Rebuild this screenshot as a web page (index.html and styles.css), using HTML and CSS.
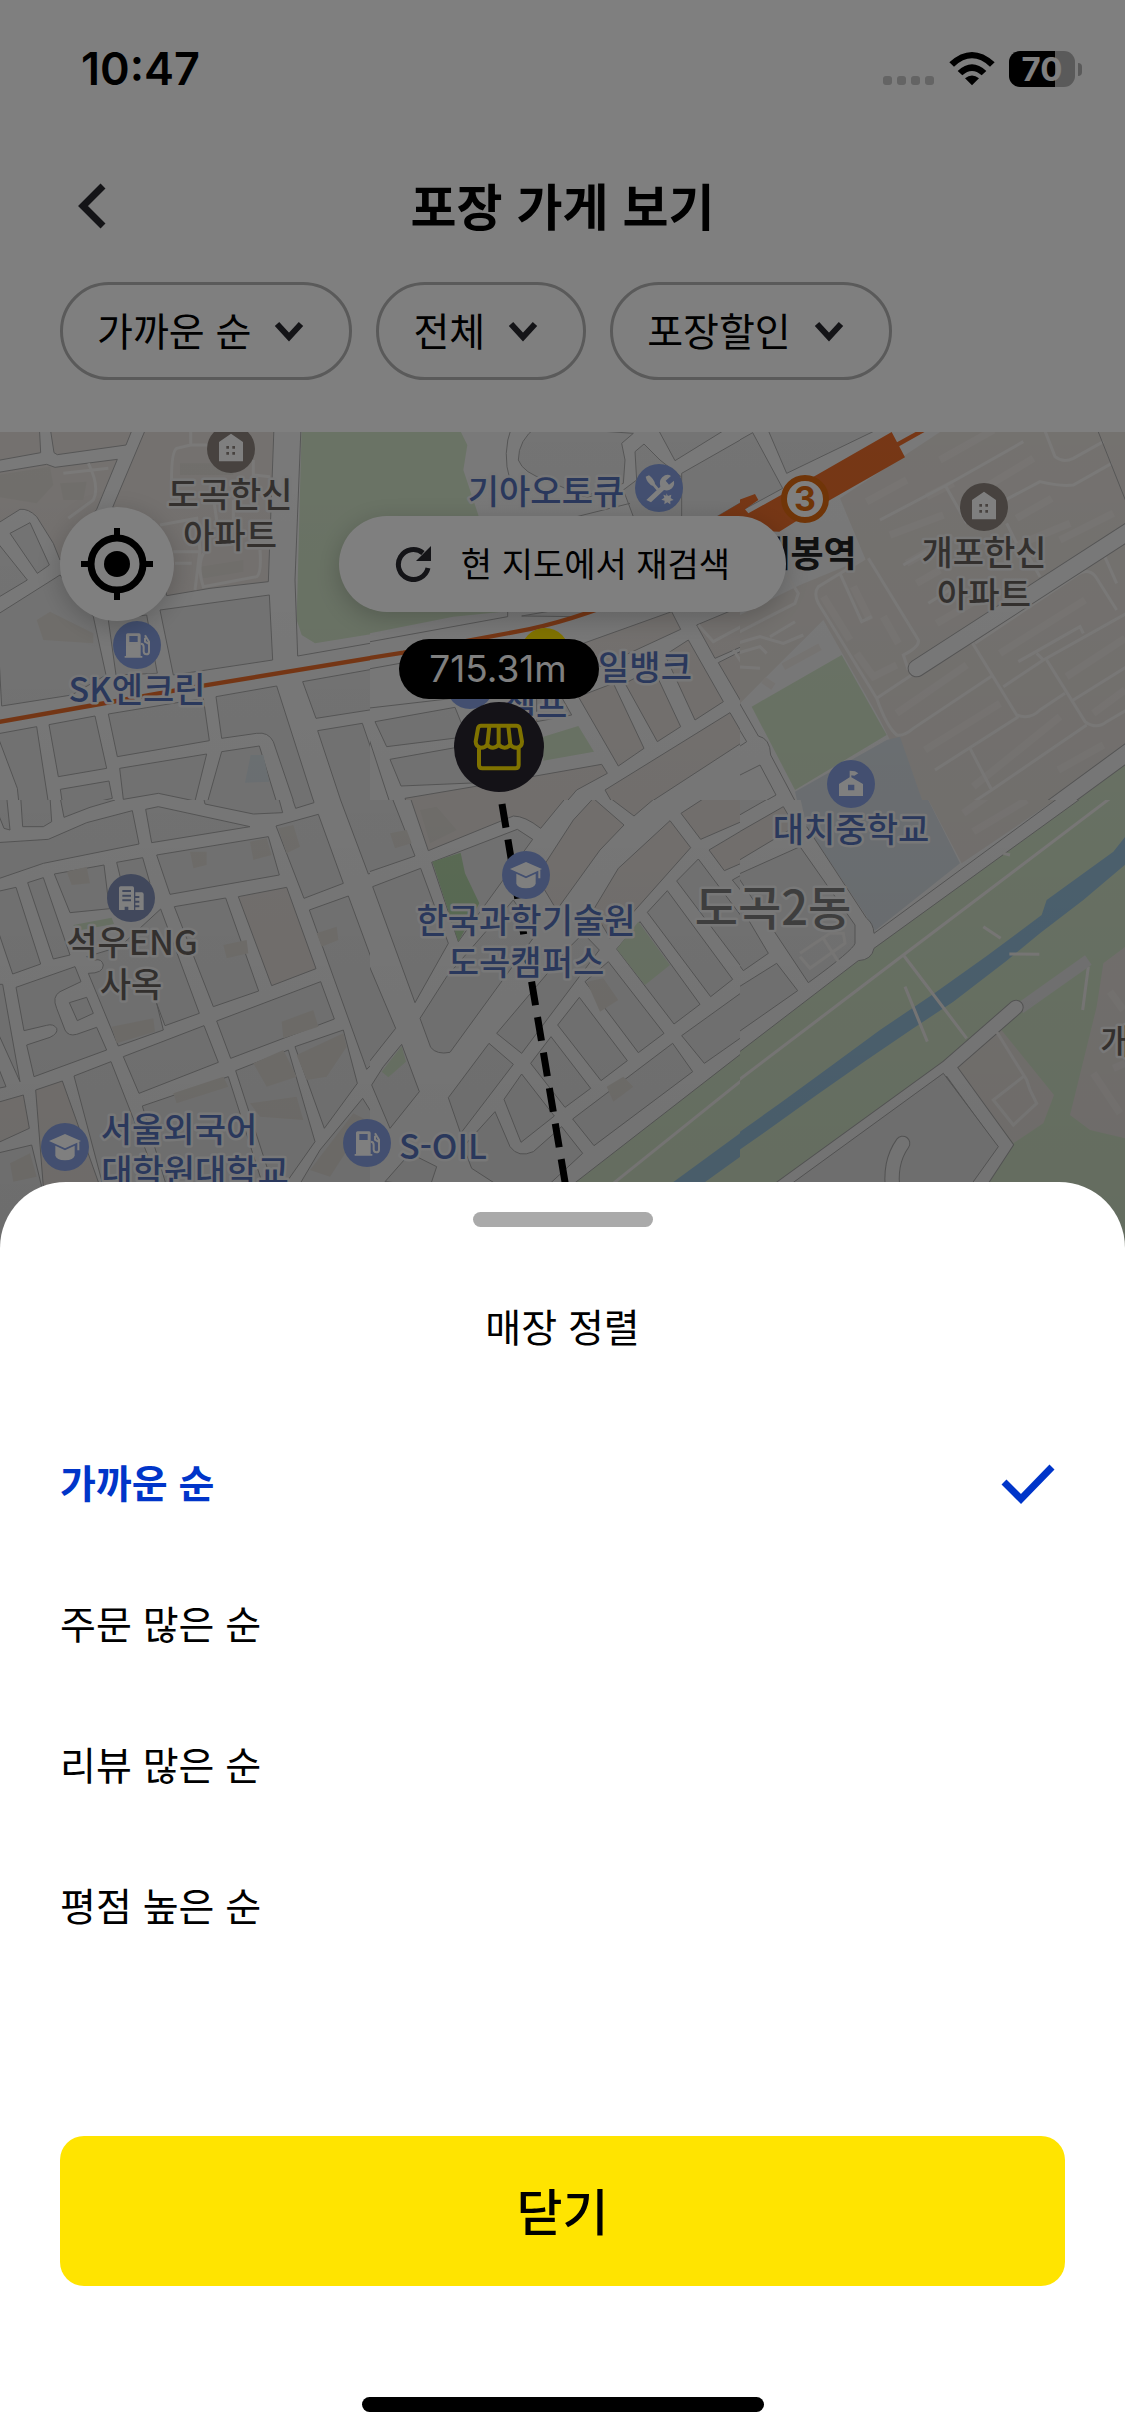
FILE: index.html
```html
<!DOCTYPE html>
<html lang="ko">
<head>
    <meta charset="UTF-8">
    <meta name="viewport" content="width=device-width, initial-scale=1.0">
    <title>포장 가게 보기</title>
    <link rel="stylesheet" href="styles.css">
</head>
<body>
    <div class="app">
        <div class="status-bar">
            <span class="time">10:47</span>
            <div class="status-icons">
                <svg class="dots" viewBox="0 0 52 36" width="52" height="36">
                    <rect x="0" y="25" width="9" height="9" rx="3"/>
                    <rect x="14" y="25" width="9" height="9" rx="3"/>
                    <rect x="28" y="25" width="9" height="9" rx="3"/>
                    <rect x="42" y="25" width="9" height="9" rx="3"/>
                </svg>
                <svg class="wifi" viewBox="0 0 138 108" width="46" height="36">
                    <path d="M69 103 L48 82 Q69 65 90 82 Z"/>
                    <path d="M26 60 Q69 20 112 60 L98 73 Q69 47 40 73 Z"/>
                    <path d="M1 34 Q69 -28 137 34 L123 47 Q69 -3 15 47 Z"/>
                </svg>
                <div class="battery"><span class="battery-level">70</span></div>
            </div>
        </div>

        <header class="header">
            <button class="back" aria-label="뒤로">
                <svg viewBox="0 0 28 46" width="28" height="46"><path d="M25 3 L5 23 L25 43"/></svg>
            </button>
            <h1>포장 가게 보기</h1>
        </header>

        <div class="filters">
            <button class="filter"><span>가까운 순</span>
                <svg viewBox="0 0 48 48" width="48" height="48"><path d="M12 17 L24 30 L36 17"/></svg>
            </button>
            <button class="filter"><span>전체</span>
                <svg viewBox="0 0 48 48" width="48" height="48"><path d="M12 17 L24 30 L36 17"/></svg>
            </button>
            <button class="filter"><span>포장할인</span>
                <svg viewBox="0 0 48 48" width="48" height="48"><path d="M12 17 L24 30 L36 17"/></svg>
            </button>
        </div>

        <main class="map-area">
            <svg class="map" viewBox="0 432 1125 868" preserveAspectRatio="xMidYMin slice">
                <defs>
                    <symbol id="poi-house" viewBox="0 0 144 144">
                        <circle cx="72" cy="72" r="72"/>
                        <path class="glyph" fill-rule="evenodd" d="M36 109 V51 L72 26 L108 51 V109 Z M58 63 v8 h8 v-8 Z M76 63 v8 h8 v-8 Z M58 81 v8 h8 v-8 Z M76 81 v8 h8 v-8 Z"/>
                    </symbol>
                    <symbol id="poi-fuel" viewBox="0 0 144 144">
                        <circle cx="72" cy="72" r="72"/>
                        <path class="glyph" fill-rule="evenodd" d="M39 105 V42 Q39 37 44 37 H78 Q83 37 83 42 V105 H88 V110 H35 V105 Z M49 45 V63 H74 V45 Z"/>
                        <path class="glyph-line" d="M83 68 Q92 68 92 78 V92 Q93 100 100 100 Q108 100 108 92 V62 L96 43 M96 50 V62 L106 68"/>
                    </symbol>
                    <symbol id="poi-cap" viewBox="0 0 144 144">
                        <circle cx="72" cy="72" r="72"/>
                        <path class="glyph" d="M24 54 L72 33 L120 54 L72 76 Z M43 68 L72 82 L101 68 V98 Q98 110 72 112 Q46 110 43 98 Z M109 58 H115 V82 H109 Z"/>
                    </symbol>
                    <symbol id="poi-office" viewBox="0 0 144 144">
                        <circle cx="72" cy="72" r="72"/>
                        <path class="glyph" fill-rule="evenodd" d="M36 108 V42 Q36 37 41 37 H76 Q81 37 81 42 V108 H64 V98 H53 V108 Z M46 48 v6 h26 v-6 Z M46 62 v6 h26 v-6 Z M46 76 v6 h26 v-6 Z M85 55 H104 Q110 55 110 61 V108 H85 V100 H97 V94 H85 V86 H97 V80 H85 V72 H97 V66 H85 Z"/>
                    </symbol>
                    <symbol id="poi-repair" viewBox="0 0 144 144">
                        <circle cx="72" cy="72" r="72"/>
                        <path class="glyph" d="M34 108 L76 68 Q70 44 90 34 Q100 30 108 36 L92 50 L102 62 L117 50 Q120 70 104 77 Q96 81 87 78 L48 115 Z M32 38 L42 34 Q58 46 60 60 L72 74 L66 80 L54 66 Q36 58 32 38 Z M94 88 l5 8 10 -4 -2 10 9 6 -10 3 0 10 -9 -6 -9 6 1 -11 -10 -3 9 -6 -3 -9 9 3 Z"/>
                    </symbol>
                    <symbol id="poi-school" viewBox="0 0 144 144">
                        <circle cx="72" cy="72" r="72"/>
                        <path class="glyph" fill-rule="evenodd" d="M36 108 V72 L68 52 V32 L84 34 L94 40 L82 47 L73 46 V52 L108 72 V108 Z M63 74 V91 H82 V74 Z"/>
                    </symbol>
                    <linearGradient id="shade" x1="0" y1="0" x2="0" y2="1">
                        <stop offset="0" stop-color="#000" stop-opacity="0.01"/>
                        <stop offset="1" stop-color="#000" stop-opacity="0.07"/>
                    </linearGradient>
                </defs>

                <rect class="road" x="0" y="432" width="1125" height="868"/>

                <!-- north west tile -->
                <svg x="0" y="420" width="380" height="390" viewBox="0 0 1140 1170">
                    <g class="block">
                        <path class="beige" d="M-10 20 H118 L122 98 L-10 122 Z"/>
                        <path class="beige" d="M150 20 L162 98 L172 104 L378 75 L400 20 Z"/>
                        <path class="beige" d="M-10 158 L140 133 L165 142 L352 118 L290 268 L180 420 L160 370 L110 290 Q85 265 60 268 L-10 312 Z"/>
                        <path d="M-10 365 L82 480 L-10 535 Z"/>
                        <path d="M30 340 L90 308 L148 435 L112 460 Z"/>
                        <path class="beige" d="M440 20 L338 262 L460 300 L500 527 L630 505 L805 485 L822 20 Z"/>
                        <path d="M480 570 L808 525 L818 720 L520 765 Z"/>
                        <path d="M-10 585 L180 465 L280 590 L318 765 L215 825 L5 858 Z"/>
                        <path d="M325 600 L440 585 L472 760 L348 765 Z"/>
                        <path d="M325 882 L610 835 L628 962 L352 1010 Z"/>
                        <path d="M648 830 L830 798 L942 1148 L888 1165 L820 965 Q805 935 770 940 L665 955 Z"/>
                        <path d="M908 785 L1160 740 V862 L948 895 Z"/>
                        <path d="M953 932 L1087 910 L1180 1180 H1035 Z"/>
                        <path d="M1127 903 L1160 898 V990 Z"/>
                        <path d="M147 914 L285 888 L320 1045 L175 1070 Z"/>
                        <path d="M-10 942 L110 920 L150 1180 H60 L52 1105 L-10 940 Z"/>
                        <path d="M359 1045 L620 1002 L585 1143 L475 1120 L370 1138 Z"/>
                        <path d="M181 1108 L327 1083 L337 1135 L190 1168 Z"/>
                        <path d="M665 995 L778 978 L840 1180 H700 L620 1155 Z"/>
                    </g>
                    <path class="house" d="M-10 165 L150 140 L160 195 L110 250 L-10 230 Z M180 190 L260 185 L250 240 L190 240 Z M110 600 L150 575 L280 640 V670 L130 660 Z M540 130 H700 V165 H540 Z M600 440 L730 420 V455 L610 475 Z"/>
                    <path class="lane" d="M265 130 Q300 200 280 240 L205 295 M190 160 L325 145 M572 30 V75 L530 85 Q512 95 515 210 M572 75 H625 M480 315 L590 295 L600 390 L585 510 M520 395 H600 M610 400 Q590 440 610 500 L770 470 Q785 460 780 390 M640 230 L650 300 M700 240 V300 M760 120 V165 L810 170 M525 430 H575"/>
                    <path class="park" d="M905 20 H1160 V635 L945 670 L905 645 L890 600 Z"/>
                    <path class="edge" d="M903 20 L885 480 L893 708 L1150 663"/>
                    <path class="water" d="M752 1005 L790 1005 L808 1085 L735 1088 Z"/>
                    <path class="rail" d="M-10 907 L300 852 L560 805 L1150 708"/>
                </svg>

                <!-- north tile -->
                <svg x="370" y="420" width="380" height="390" viewBox="0 0 1140 1170">
                    <rect class="road" width="1140" height="1170"/>
                    <path class="park" d="M-10 20 H265 L292 75 L280 150 L325 285 L400 575 L250 590 L-10 642 Z"/>
                    <g class="block">
                        <path d="M500 20 Q445 60 445 120 Q460 160 530 180 L640 230 L760 190 L765 120 L755 70 L790 40 Z"/>
                        <path d="M822 72 L795 95 L800 180 L760 210 L790 290 L900 300 L1060 270 L870 120 Z"/>
                        <path d="M860 20 L915 122 L1080 20 Z"/>
                        <path d="M935 160 L1160 32 V220 L1040 290 H935 Z"/>
                        <path class="beige" d="M640 670 L905 575 L932 628 L690 740 Z"/>
                        <path d="M15 905 L255 862 L290 950 L50 980 Z"/>
                        <path d="M60 1018 L300 975 L420 1045 L400 1085 L93 1098 Z"/>
                        <path class="beige" d="M105 1135 L400 1085 L695 1033 L712 1060 L620 1110 L560 1180 H120 Z"/>
                        <path class="beige" d="M625 830 L730 790 L822 985 L745 1038 Z"/>
                        <path class="beige" d="M765 790 L850 745 L932 920 L862 965 Z"/>
                        <path class="beige" d="M885 705 L955 660 L1060 845 L975 900 Z"/>
                        <path class="beige" d="M705 1110 L1080 878 L1128 960 L790 1180 H745 Z"/>
                        <path class="beige" d="M980 615 L1160 540 V660 L1035 715 Z"/>
                        <path class="beige" d="M1045 728 L1160 670 V925 Z"/>
                        <path d="M455 588 L560 570 H690 L620 590 Z"/>
                        <path d="M500 830 L560 805 L605 885 L500 905 Z"/>
                    </g>
                    <path class="park" d="M520 950 L625 918 L672 995 L520 1022 Z"/>
                    <path class="edge" d="M425 20 Q395 100 420 180 M-10 667 L413 590 V560 M-10 748 L90 730 M-10 865 L250 835 M-10 935 L70 1180 M620 290 L780 250 M620 245 L700 215"/>
                    <path class="lane" d="M985 615 L1030 665 L1150 600 M1090 690 L1130 750"/>
                    <path class="rail" d="M-10 715 L100 698 L440 635 Q600 605 780 530 L1040 300 L1160 230"/>
                    <path class="station" d="M1040 290 L1150 225 V300 Z"/>
                </svg>

                <!-- north east tile -->
                <svg x="740" y="420" width="385" height="390" viewBox="0 0 1155 1170">
                    <rect class="road" width="1155" height="1170"/>
                    <g class="block">
                        <path d="M-10 65 L38 38 L128 205 L-10 280 Z"/>
                        <path d="M80 20 L140 160 L430 20 Z"/>
                    </g>
                    <path class="estate" d="M300 235 L600 36 V20 H1160 V970 L900 1180 H560 L420 900 L250 600 L-10 860 V590 L130 520 L180 495 L375 415 Z"/>
                    <g class="houses">
                        <path d="M380 245 L500 180 M600 120 L760 30 M560 230 L640 190 M450 345 L610 285 M500 430 L640 350 M740 200 L880 115 M830 295 L935 235 M530 490 L600 450 M960 360 L1120 280 M590 610 L720 535 M780 700 L1035 540 M470 880 L680 735 M555 990 L780 850 M700 1100 L960 890 M980 770 L1155 655 M955 1050 L1090 975 M1060 880 L1155 810 M820 380 L990 310 M250 530 L330 660 M340 500 L390 600 M430 590 L475 670 M350 700 L400 770 L470 735 M130 740 L240 680 M70 780 L100 800"/>
                    </g>
                    <path class="park" d="M35 860 L305 705 L440 945 L165 1110 Z"/>
                    <path class="school" d="M165 1115 L440 960 L480 950 L560 1180 H180 Z"/>
                    <path class="lane" d="M410 835 L515 765 M375 415 L235 500 Q220 520 235 550 L410 835 Q440 920 470 945 Q490 950 520 925 L760 765 M385 415 L535 660 Q540 680 490 705 L505 750 M300 460 L365 605 L395 590 M695 665 L830 885 Q870 900 900 870 L975 820 M920 720 L1035 905 Q1070 930 1100 905 L1160 870 M790 800 L910 720 L1160 580 M1000 840 L1160 740 M585 1050 L835 890 M690 985 L755 1110 L650 1180 M755 1110 L1040 915 M420 300 L620 195 L850 65 M615 195 L680 310 M910 20 L945 110 Q970 130 1000 115 L1090 65 M720 280 L900 185 Q960 200 1000 195 L1115 130 M705 670 L1010 465 Q1050 440 1070 475 L1130 570 M835 725 L1020 620 L1030 640 M490 435 L560 395 M800 310 L830 370 M565 550 L660 490 M900 470 L860 400 M1090 400 L1130 490 M-10 640 L165 550 L175 520 L140 465 M-10 670 L60 650 L130 670 L190 645 M90 650 L165 605 M-10 700 L60 680 L80 700 M-10 740 L60 745 M890 700 L910 720"/>
                    <path class="casing wide" d="M1180 325 L530 745"/>
                    <path class="street wide" d="M1180 325 L530 745"/>
                    <path class="park" d="M1160 1030 L960 1180 H1160 Z"/>
                    <path class="casing wide" d="M1180 985 L900 1190"/>
                    <path class="street wide" d="M1180 985 L900 1190"/>
                    <path class="edge" d="M-10 835 L55 948 Q90 955 92 1005 L185 1180 M-10 915 L20 965 L-10 985 M-10 1070 L60 1035 L108 1125 L20 1175 M1075 36 L1160 250"/>
                    <path class="rail" d="M470 75 L560 25"/>
                    <path class="station" d="M455 36 L495 112 L270 240 L118 335 L-10 330 V242 L45 222 L55 240 L15 268 L25 280 L230 165 Z"/>
                </svg>

                <!-- south west tile -->
                <svg x="0" y="800" width="380" height="500" viewBox="0 0 1140 1500">
                    <rect class="road" width="1140" height="1500"/>
                    <g class="block">
                        <path d="M-10 -10 H20 L30 90 L12 85 L-10 30 Z"/>
                        <path d="M62 -10 L68 80 H130 L155 65 L150 -10 Z"/>
                        <path d="M180 -10 L192 52 L270 22 L345 0 V-10 Z"/>
                        <path d="M-10 128 L145 118 L260 68 L397 32 L417 132 L130 190 L-10 238 Z"/>
                        <path d="M437 28 L475 20 L750 80 L455 128 Z"/>
                        <path d="M615 12 L760 42 L848 38 L835 -10 H610 Z"/>
                        <path d="M875 -10 L887 25 L942 8 L938 -10 Z"/>
                        <path d="M470 165 L805 110 L838 225 L510 283 Z"/>
                        <path d="M828 78 L955 43 L1030 250 L912 295 Z"/>
                        <path d="M1018 -10 L1105 222 L1160 205 V-10 Z"/>
                        <path d="M163 222 L312 195 L325 300 L340 325 L210 338 Z"/>
                        <path d="M350 187 L428 173 L450 250 L370 270 Z"/>
                        <path d="M83 248 L130 233 L210 465 L160 477 Z"/>
                        <path d="M-10 275 L48 262 L122 492 L38 522 L-10 380 Z"/>
                        <path d="M523 320 L677 294 L776 573 L640 620 Z"/>
                        <path class="beige" d="M715 290 L860 262 L948 506 L815 557 Z"/>
                        <path d="M928 330 L1045 288 L1160 600 V750 L1100 808 Z"/>
                        <path d="M260 470 L360 440 L482 327 L598 640 L495 677 L470 610 L490 690 L355 738 L265 520 Q310 520 310 495 Q305 475 285 480 Z"/>
                        <path d="M48 562 L225 500 L243 545 L180 575 Q155 590 170 625 L195 690 Q205 710 230 703 L290 682 L320 750 L102 830 L80 735 L150 712 Q175 700 170 685 Q160 670 140 676 L72 692 Z"/>
                        <path d="M208 608 L260 592 L280 640 L232 662 Z"/>
                        <path d="M370 770 L612 677 L655 787 L417 880 Z"/>
                        <path d="M650 663 L962 545 L1003 657 L692 775 Z"/>
                        <path d="M222 828 L333 785 L480 1160 H310 Z"/>
                        <path d="M707 812 L865 750 L945 1025 L850 1160 H820 Z"/>
                        <path d="M885 740 L1030 690 L1072 850 L973 985 Z"/>
                        <path d="M427 918 L685 830 L790 1160 H500 Z"/>
                        <path d="M1088 895 L1160 1010 V1160 H895 L960 1050 Z"/>
                        <path class="beige" d="M107 870 L187 843 L300 1160 H130 Z"/>
                        <path class="beige" d="M-10 908 L70 885 L88 985 L-10 1030 Z"/>
                        <path d="M-10 1060 L95 1035 L125 1160 V1500 H-10 Z"/>
                        <path d="M-10 553 L8 553 L60 845 L-10 690 Z"/>
                        <path d="M-10 790 L18 860 L-10 866 Z"/>
                    </g>
                    <path class="house" d="M570 155 H620 V195 L580 205 Z M750 125 L800 115 L815 165 L760 180 Z M835 85 L880 75 L900 140 L860 160 Z M200 215 L260 200 L270 250 L215 255 Z M670 435 L740 420 L745 460 L680 475 Z M950 400 L1010 380 L1015 420 L965 440 Z M335 680 L460 655 L465 695 L350 730 Z M845 665 L940 630 L955 680 L850 715 Z M520 880 L670 830 L685 860 L530 910 Z M760 790 L850 750 L890 830 L800 860 Z M890 765 L1030 700 L1040 740 L980 830 L920 840 Z M750 910 L890 890 L910 960 L780 950 Z M930 1110 L1060 940 L1100 960 L990 1130 Z M30 1090 L90 1060 L110 1130 L40 1145 Z"/>
                    <path class="park" d="M220 375 L335 353 L342 372 L230 392 Z"/>
                </svg>

                <!-- south tile -->
                <svg x="370" y="800" width="380" height="500" viewBox="0 0 1140 1500">
                    <rect class="road" width="1140" height="1500"/>
                    <g class="block">
                        <path d="M-10 -10 H65 L135 168 L-10 218 Z"/>
                        <path class="beige" d="M120 -10 L175 152 L430 48 Q465 48 512 85 L590 -10 Z"/>
                        <path d="M185 187 L442 88 L488 118 L265 425 Z"/>
                        <path d="M8 260 L152 205 L235 430 L135 608 Z"/>
                        <path d="M150 655 L230 530 L430 300 L500 400 L240 757 Q200 765 182 742 Z"/>
                        <path d="M380 700 L600 440 L640 400 L688 450 L455 760 Z"/>
                        <path class="beige" d="M500 230 L610 60 L670 -5 L762 75 L690 150 L560 330 Z"/>
                        <path class="beige" d="M900 62 L962 143 L720 415 L670 330 L745 205 Z"/>
                        <path class="beige" d="M715 -10 L792 48 L860 -10 Z"/>
                        <path class="beige" d="M933 40 L1010 -10 H1160 V45 L992 118 Z"/>
                        <path class="beige" d="M1017 150 L1160 65 V170 L1063 212 Z"/>
                        <path d="M985 177 L920 243 L1125 515 L1160 490 V410 Z"/>
                        <path d="M1087 240 L1160 200 V330 Z"/>
                        <path d="M892 272 L832 337 L1022 590 L1088 538 Z"/>
                        <path d="M810 365 L740 447 L912 672 L990 613 Z"/>
                        <path d="M715 485 L645 545 L805 758 L882 700 Z"/>
                        <path d="M628 592 L563 675 L693 842 L772 782 Z"/>
                        <path d="M543 710 L482 790 L585 922 L662 865 Z"/>
                        <path d="M455 822 L402 898 L453 1027 L553 948 Z"/>
                        <path d="M357 730 L430 793 L272 1000 L235 893 Z"/>
                        <path d="M95 733 L148 875 L60 985 L5 855 L40 800 Z"/>
                        <path d="M-10 480 L77 685 L-10 795 Z"/>
                        <path d="M908 730 L968 815 L672 1037 L608 957 Z"/>
                        <path d="M935 707 L1160 545 V680 L1003 790 Z"/>
                        <path d="M375 935 L420 1040 Q445 1075 490 1055 L575 980 L638 1060 L530 1160 H390 L305 1105 L280 1040 Z"/>
                        <path d="M45 1145 L120 1060 L200 1100 L180 1160 Z"/>
                    </g>
                    <path class="house" d="M650 545 L700 535 L745 600 L690 635 Z M710 860 L760 830 L790 860 L730 905 Z M60 100 L110 90 L125 130 L75 145 Z M150 30 L200 20 L260 90 L180 130 Z"/>
                    <path class="wood" d="M187 185 L272 158 L285 220 L328 310 L265 425 Z"/>
                    <path class="park" d="M805 365 L740 447 L825 555 L900 495 Z"/>
                    <path class="park" d="M95 738 L35 815 L55 832 L108 785 Z"/>
                    <path class="park" d="M1160 725 L600 1160 H1160 Z"/>
                    <path class="edge" d="M1160 725 L600 1160"/>
                    <path class="lane" d="M730 1150 L1160 805"/>
                    <path class="river" d="M905 1150 L1110 1000 L1160 970 V1035 L1000 1150 Z"/>
                </svg>

                <!-- south east tile -->
                <svg x="740" y="800" width="385" height="500" viewBox="0 0 1155 1500">
                    <rect class="road" width="1155" height="1500"/>
                    <path class="school" d="M180 -10 H560 L660 190 L405 392 L380 350 L200 80 Z"/>
                    <path class="estate" d="M560 -10 H960 L665 190 Z"/>
                    <g class="block">
                        <path d="M-10 50 L95 -10 H-10 Z"/>
                        <path class="beige" d="M-10 100 L130 20 L165 80 L-10 185 Z"/>
                        <path d="M-10 225 L180 140 L345 375 V430 Q340 450 205 548 Z"/>
                        <path d="M-10 300 L85 460 L10 512 L-10 485 Z"/>
                        <path d="M-10 565 L110 490 L173 572 L-10 700 Z"/>
                        <path class="park" d="M-10 762 L355 482 Q395 480 402 445 L1030 -10 H1170 V1510 H-10 Z"/>
                    </g>
                    <path class="houses" d="M670 40 L740 -10 M700 95 L860 0"/>
                    <path class="edge" d="M200 80 L380 355 Q400 370 402 400 L960 -10"/>
                    <path class="lane" d="M180 460 L270 400 L310 400 L315 430 L210 505 L180 470 M250 415 L295 485"/>
                    <path class="river" d="M-10 1002 L120 910 L270 800 L420 690 L580 582 L740 468 L905 345 L920 300 L1120 155 L1160 105 V190 L1030 300 L900 400 L800 482 L640 605 L520 685 L380 780 L230 885 L70 1000 L-10 1055 Z"/>
                    <path class="lane" d="M-10 845 L490 465 L1110 -5 M490 465 L680 715 M495 560 L562 725 M730 380 L782 415 M808 462 L898 463 M1045 500 L1028 630 M790 160 L810 165"/>
                    <path class="estate" d="M640 795 L780 685 L942 885 L910 970 L820 1030 Z"/>
                    <path class="estate" d="M1170 430 L1090 490 L1070 620 L990 945 L1050 990 L1170 1018 Z"/>
                    <path class="houses" d="M1110 575 L1150 630 M1060 820 L1140 940 M1120 805 L1155 790"/>
                    <path class="path" d="M840 625 L1045 480"/>
                    <path class="casing" d="M100 1180 L620 803 L828 622 M625 800 L795 1035 L700 1180"/>
                    <path class="street" d="M100 1180 L620 803 L828 622 M625 800 L795 1035 L700 1180"/>
                    <g class="block"><path d="M115 1180 L610 820 L775 1040 L675 1180 Z"/></g>
                    <path class="casing" d="M488 1030 Q445 1090 460 1180"/>
                    <path class="street" d="M488 1030 Q445 1090 460 1180"/>
                    <path class="lane" d="M770 695 L860 840 L870 870 L890 910 L820 975 L760 900 L850 830"/>
                </svg>

                <rect x="0" y="432" width="1125" height="868" fill="url(#shade)"/>

                <path class="route" d="M502 804 L568 1200"/>

                <g class="poi-blue">
                    <use href="#poi-fuel" x="113" y="621" width="48" height="48"/>
                    <use href="#poi-fuel" x="343" y="1119" width="48" height="48"/>
                    <use href="#poi-cap" x="502" y="851" width="48" height="48"/>
                    <use href="#poi-cap" x="41" y="1123" width="48" height="48"/>
                    <use href="#poi-repair" x="635" y="464" width="48" height="48"/>
                    <use href="#poi-school" x="827" y="760" width="48" height="48"/>
                    <circle cx="470" cy="685" r="24"/>
                </g>
                <use class="poi-slate" href="#poi-office" x="107" y="874" width="48" height="48"/>
                <g class="poi-brown">
                    <use href="#poi-house" x="207" y="425" width="48" height="48"/>
                    <use href="#poi-house" x="960" y="483" width="48" height="48"/>
                </g>

                <g class="label label-blue">
                    <text x="137" y="702">SK엔크린</text>
                    <text x="546" y="504">기아오토큐</text>
                    <text x="645" y="680">일뱅크</text>
                    <text x="536" y="718">셀프</text>
                    <text x="851" y="842">대치중학교</text>
                    <text x="526" y="933">한국과학기술원</text>
                    <text x="526" y="975">도곡캠퍼스</text>
                    <text x="179" y="1142">서울외국어</text>
                    <text x="195" y="1184">대학원대학교</text>
                    <text x="443" y="1159">S-OIL</text>
                </g>
                <g class="label label-gray">
                    <text x="230" y="507">도곡한신</text>
                    <text x="230" y="548">아파트</text>
                    <text x="984" y="565">개포한신</text>
                    <text x="984" y="607">아파트</text>
                    <text x="132" y="955">석우ENG</text>
                    <text x="131" y="997">사옥</text>
                    <text x="1116" y="1054">개</text>
                </g>
                <text class="label label-district" x="773" y="925">도곡2동</text>

                <circle class="line-ring" cx="805" cy="499" r="21"/>
                <text class="line-number" x="805" y="511">3</text>
                <text class="label label-station" x="807" y="567">매봉역</text>

                <circle class="yellow" cx="545" cy="652" r="24"/>
                <rect x="399" y="639" width="200" height="60" rx="30"/>
                <text class="distance" x="498" y="682">715.31m</text>
                <circle class="marker" cx="499" cy="747" r="45"/>
                <svg class="store" x="473" y="721" width="52" height="52" viewBox="0 0 156 156">
                    <path d="M24 14 H130 Q138 14 140 22 L147 62 Q147 78 131 80 Q117 80 112 70 Q106 80 95 80 Q83 80 77 70 Q71 80 60 80 Q48 80 43 70 Q38 80 24 80 Q9 78 8 62 L15 22 Q17 14 24 14 Z M49 16 L43 70 M77 16 V70 M106 16 L112 70 M18 80 V132 Q18 142 28 142 H127 Q137 142 137 132 V80"/>
                </svg>
            </svg>

            <div class="map-controls">
                <button class="locate" aria-label="내 위치">
                    <svg viewBox="0 0 72 72" width="72" height="72">
                        <circle class="ring" cx="36" cy="36" r="26"/>
                        <circle cx="36" cy="36" r="13"/>
                        <path d="M33 0 h6 v10 h-6 Z M33 62 h6 v10 h-6 Z M0 33 h10 v6 h-10 Z M62 33 h10 v6 h-10 Z"/>
                    </svg>
                </button>
                <button class="research">
                    <svg viewBox="0 0 36 36" width="36" height="36">
                        <path class="arc" d="M33 22 A15 15 0 1 1 28 7"/>
                        <path d="M36 0 V15 H21 Z"/>
                    </svg>
                    <span>현 지도에서 재검색</span>
                </button>
            </div>
        </main>
    </div>

    <div class="dim"></div>

    <form class="sheet">
        <div class="handle"></div>
        <h2>매장 정렬</h2>
        <div class="options">
            <label class="option">
                <input type="radio" name="sort" checked>
                <span>가까운 순</span>
                <svg viewBox="0 0 54 40" width="54" height="40"><path d="M3 18 L20 35 L51 3"/></svg>
            </label>
            <label class="option">
                <input type="radio" name="sort">
                <span>주문 많은 순</span>
                <svg viewBox="0 0 54 40" width="54" height="40"><path d="M3 18 L20 35 L51 3"/></svg>
            </label>
            <label class="option">
                <input type="radio" name="sort">
                <span>리뷰 많은 순</span>
                <svg viewBox="0 0 54 40" width="54" height="40"><path d="M3 18 L20 35 L51 3"/></svg>
            </label>
            <label class="option">
                <input type="radio" name="sort">
                <span>평점 높은 순</span>
                <svg viewBox="0 0 54 40" width="54" height="40"><path d="M3 18 L20 35 L51 3"/></svg>
            </label>
        </div>
        <button class="close" type="button"><span>닫기</span></button>
        <div class="home-indicator"></div>
    </form>
</body>
</html>
```

FILE: styles.css
```css
* {
    box-sizing: border-box;
}
body {
    margin: 0;
    background-color: #fff;
    color: #000;
    font-family: "Noto Sans CJK KR", sans-serif;
    font-size: 39px;
}
button {
    padding: 0;
    border: none;
    background: none;
    color: inherit;
    font: inherit;
    cursor: pointer;
}
svg {
    display: block;
}
h1, h2 {
    margin: 0;
}
.app {
    display: flex;
    flex-direction: column;
    height: 100vh;
    overflow: hidden;
}

/* Status bar */
.status-bar {
    display: flex;
    justify-content: space-between;
    align-items: center;
    padding: 39px 42px 0 81px;
}
.time {
    font-family: Inter, sans-serif;
    font-size: 45px;
    font-weight: 600;
    line-height: 60px;
}
.status-icons {
    display: flex;
    align-items: center;
    gap: 14px;
}
.dots {
    fill: #c8c8c8;
}
.battery {
    position: relative;
    width: 66px;
    height: 36px;
    margin-right: 8px;
    border-radius: 11px;
    background: linear-gradient(90deg, #000 70%, #b4b4b4 70%);
    text-align: center;
}
.battery::after {
    content: "";
    position: absolute;
    top: 12px;
    right: -7px;
    width: 4px;
    height: 13px;
    border-radius: 0 4px 4px 0;
    background-color: #b4b4b4;
}
.battery-level {
    display: block;
    color: #fff;
    font-family: Inter, sans-serif;
    font-size: 33px;
    font-weight: 700;
    line-height: 36px;
}

/* Header */
.header {
    display: grid;
    grid-template-columns: 64px 1fr 64px;
    align-items: center;
    padding: 67px 60px 36px;
}
.back {
    padding: 0 18px;
}
.back path, .filter path {
    fill: none;
    stroke: #28282f;
    stroke-width: 7;
}
.header h1 {
    padding-bottom: 4px;
    font-size: 50px;
    font-weight: 700;
    line-height: 76px;
    text-align: center;
}
.filters {
    display: flex;
    gap: 24px;
    padding: 0 60px 52px;
}
.filter {
    display: flex;
    align-items: center;
    gap: 14px;
    height: 98px;
    padding: 0 36px 0 34px;
    border: 3px solid #b4b4b4;
    border-radius: 49px;
    white-space: nowrap;
}
.filter span, .research span, .close span {
    padding-bottom: 4px;
}
.filter path {
    stroke-width: 6;
}

/* Map */
.map-area {
    position: relative;
    flex: 1;
    overflow: hidden;
}
.map {
    width: 100%;
    height: 868px;
}
.road { fill: #f5f5f5; }
.block path {
    fill: #eaeaea;
    stroke: #aeaeae;
    stroke-width: 3;
}
.block .beige { fill: #ebe5e1; }
.estate { fill: #ebe6e1; }
.house { fill: #e4e0da; }
.houses {
    fill: none;
    stroke: #f1ece8;
    stroke-width: 22;
}
.park, .block .park { fill: #d7e9cd; }
.wood { fill: #b9dcae; }
.water { fill: #dbe5ea; }
.school { fill: #dce3e9; }
.river { fill: #9cc6e2; }
.edge {
    fill: none;
    stroke: #aeaeae;
    stroke-width: 3;
}
.lane {
    fill: none;
    stroke: #f7f5f3;
    stroke-width: 9;
}
.path {
    fill: none;
    stroke: #e9e9e9;
    stroke-width: 34;
}
.casing {
    fill: none;
    stroke: #aeaeae;
    stroke-width: 46;
    stroke-linecap: round;
}
.street {
    fill: none;
    stroke: #f5f5f5;
    stroke-width: 40;
    stroke-linecap: round;
}
.casing.wide { stroke-width: 54; }
.street.wide { stroke-width: 48; }
.rail {
    fill: none;
    stroke: #f0702c;
    stroke-width: 13;
}
.station { fill: #f0702c; }
.route {
    fill: none;
    stroke: #000;
    stroke-width: 7;
    stroke-dasharray: 24 12;
}
.glyph { fill: #fff; }
.glyph-line {
    fill: none;
    stroke: #fff;
    stroke-width: 6;
}
.poi-blue { fill: #869fe0; }
.poi-slate { fill: #8290b8; }
.poi-brown { fill: #8e857f; }
.label {
    paint-order: stroke;
    stroke: #f0f0f0;
    stroke-width: 5;
    stroke-linejoin: round;
    font-size: 34px;
    font-weight: 500;
    text-anchor: middle;
}
.label-blue { fill: #5570b8; }
.label-gray { fill: #66605c; }
.label-district {
    fill: #7c7c7c;
    font-size: 47px;
}
.label-station {
    fill: #222;
    font-size: 36px;
    font-weight: 700;
}
.line-ring {
    fill: #fff;
    stroke: #e06a10;
    stroke-width: 6;
}
.line-number {
    fill: #e06a10;
    font-family: Inter, sans-serif;
    font-size: 34px;
    font-weight: 700;
    text-anchor: middle;
}
.yellow { fill: #ffe400; }
.distance {
    fill: #fff;
    font-family: Inter, sans-serif;
    font-size: 37px;
    text-anchor: middle;
}
.marker { fill: #28242f; }
.store path {
    fill: none;
    stroke: #ffe400;
    stroke-width: 12;
    stroke-linejoin: round;
}
.map-controls {
    position: absolute;
    top: 75px;
    left: 60px;
    right: 60px;
    display: grid;
    grid-template-columns: 114px 1fr 114px;
    align-items: center;
    justify-items: center;
}
.locate, .research {
    display: flex;
    align-items: center;
    justify-content: center;
    background-color: #fff;
    box-shadow: 0 6px 24px rgba(0, 0, 0, 0.2);
}
.locate {
    width: 114px;
    height: 114px;
    border-radius: 50%;
}
.ring {
    fill: none;
    stroke: #000;
    stroke-width: 7;
}
.research {
    gap: 30px;
    height: 96px;
    padding: 0 56px;
    border-radius: 48px;
    font-size: 34px;
    white-space: nowrap;
}
.research path {
    fill: #28282f;
}
.research .arc {
    fill: none;
    stroke: #28282f;
    stroke-width: 5;
}

/* Bottom sheet */
.dim {
    position: fixed;
    inset: 0;
    background-color: rgba(0, 0, 0, 0.5);
}
.sheet {
    position: fixed;
    left: 0;
    right: 0;
    bottom: 0;
    display: flex;
    flex-direction: column;
    padding: 30px 60px 24px;
    border-radius: 66px 66px 0 0;
    background-color: #fff;
}
.handle {
    align-self: center;
    width: 180px;
    height: 15px;
    border-radius: 8px;
    background-color: #aaa;
}
.sheet h2 {
    margin: 68px 0 58px;
    font-size: 39px;
    font-weight: 400;
    line-height: 60px;
    text-align: center;
}
.option {
    display: flex;
    justify-content: space-between;
    align-items: center;
    height: 141px;
    padding-right: 10px;
    cursor: pointer;
}
.option span {
    padding-bottom: 6px;
}
.option input {
    position: absolute;
    opacity: 0;
}
.option svg {
    display: none;
    fill: none;
    stroke: #0035c9;
    stroke-width: 7;
}
.option input:checked ~ span {
    color: #0035c9;
    font-weight: 700;
}
.option input:checked ~ svg {
    display: block;
}
.close {
    display: flex;
    align-items: center;
    justify-content: center;
    height: 150px;
    margin-top: 159px;
    border-radius: 24px;
    background-color: #ffe400;
    font-size: 50px;
    font-weight: 500;
}
.home-indicator {
    align-self: center;
    width: 402px;
    height: 15px;
    margin-top: 111px;
    border-radius: 8px;
    background-color: #000;
}
```
